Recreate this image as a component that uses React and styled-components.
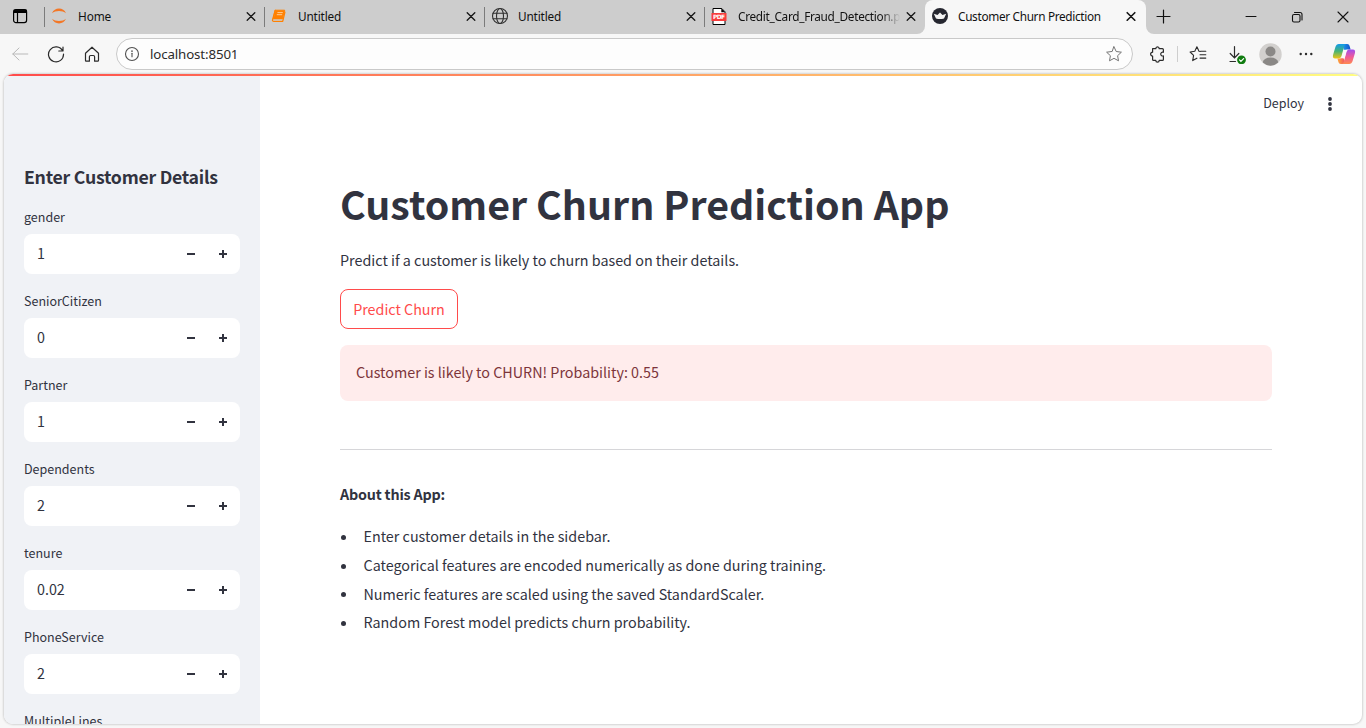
import React from "react";
import styled, { createGlobalStyle, css } from "styled-components";

const Global = createGlobalStyle`
  * { box-sizing: border-box; }
  body { margin: 0; background: #f7f7f7; overflow: hidden; }
  svg { display: block; flex: none; }
`;

const ui = `"Noto Sans", "Open Sans", sans-serif`;
const sans = `"Noto Sans CJK SC", "Noto Sans", sans-serif`;

const Window = styled.div`
  width: 1366px;
  height: 728px;
  display: flex;
  flex-direction: column;
  background: #f7f7f7;
  overflow: hidden;
`;

/* ---------- tab strip ---------- */
const TabStrip = styled.div`
  height: 34px;
  flex: none;
  display: flex;
  background: #f7f7f7;
`;
const TabGroup = styled.div`
  display: flex;
  width: 925px;
  background: #cdcdcd;
  border-bottom-right-radius: 8px;
`;
const WorkspaceButton = styled.div`
  width: 45px;
  padding: 8px 0 0 12px;
`;
const ActiveBackdrop = styled.div`
  width: 221px;
  background: #cdcdcd;
`;
const Tab = styled.div`
  width: 220px;
  height: 34px;
  display: flex;
  align-items: center;
  padding: 0 9.5px 2px 6px;
  flex: none;
  background: ${(p) => (p.$active ? "#f7f7f7" : "transparent")};
  ${(p) =>
    p.$active &&
    css`
      width: 221px;
      padding-right: 10.5px;
      border-radius: 8px 8px 0 0;
    `}
`;
const Divider = styled.i`
  width: 1px;
  height: 20px;
  margin: 7px 0 0 -1px;
  background: #7b7b7b;
  flex: none;
`;
const TabIcon = styled.span`
  width: 27px;
  flex: none;
`;
const TabTitle = styled.span`
  flex: 1;
  margin: 0 4px 0 0;
  padding-bottom: 1px;
  font: 11.8px/18px ${ui};
  letter-spacing: ${(p) => p.$track || 0}px;
  color: #111;
  white-space: nowrap;
  overflow: hidden;
  ${(p) =>
    p.$fade &&
    css`
      mask-image: linear-gradient(to right, #000 calc(100% - 20px), transparent calc(100% - 2px));
    `}
`;
const WindowControls = styled.div`
  flex: 1;
  display: flex;
  align-items: center;
  background: #cdcdcd;
  border-bottom-left-radius: 8px;
  padding: 0 17px 2px 10px;
`;
const ControlGroup = styled.div`
  display: flex;
  gap: 34px;
  margin-left: auto;
  padding-top: 2px;
`;

/* ---------- toolbar ---------- */
const Toolbar = styled.div`
  height: 40px;
  flex: none;
  display: flex;
  align-items: center;
`;
const NavButtons = styled.div`
  width: 116px;
  display: flex;
  gap: 18px;
  padding-left: 11px;
`;
const AddressBar = styled.div`
  width: 1017px;
  height: 32px;
  border: 1px solid #c9c9c9;
  border-radius: 16px;
  background: #fdfdfd;
  display: flex;
  align-items: center;
  padding: 0 9px 0 7px;
`;
const Url = styled.span`
  flex: 1;
  margin-left: 10px;
  font: 13.3px/20px ${ui};
  letter-spacing: -0.13px;
  color: #2b2b2b;
`;
const Actions = styled.div`
  flex: 1;
  display: flex;
  align-items: center;
  padding-left: 16px;
`;
const ActionSlot = styled.span`
  width: ${(p) => p.$w}px;
  display: flex;
`;
const ActionDivider = styled.i`
  width: 1px;
  height: 16px;
  margin-right: 11px;
  background: #cecece;
`;

/* ---------- page ---------- */
const Page = styled.div`
  height: 650px;
  margin: 0 4px;
  flex: none;
  display: flex;
  flex-direction: column;
  border-radius: 9px;
  overflow: hidden;
  background: #fff;
  box-shadow: 0 0 2px 1px rgba(0, 0, 0, 0.14);
  font-family: ${sans};
  color: #31333f;
`;
const Ribbon = styled.div`
  height: 2px;
  flex: none;
  background: linear-gradient(90deg, #ff4b4b, #fffd80);
`;
const Body = styled.div`
  flex: 1;
  min-height: 0;
  display: flex;
`;
const Sidebar = styled.aside`
  width: 256px;
  flex: none;
  padding: 84px 20px 0;
  background: #f0f2f6;
  overflow: hidden;
`;
const SidebarHeading = styled.h2`
  margin: 0 0 13px;
  font-size: 17.7px;
  line-height: 33px;
  font-weight: 600;
  letter-spacing: -0.26px;
  white-space: nowrap;
`;
const Field = styled.div`
  margin-bottom: 16px;
`;
const Label = styled.label`
  display: block;
  height: 24px;
  margin-bottom: 4px;
  font-size: 12.5px;
  line-height: 22px;
`;
const NumberBox = styled.div`
  height: 40px;
  border-radius: 8px;
  background: #fff;
  display: flex;
  align-items: center;
  padding: 0 10px 0 13px;
  gap: 18px;
`;
const Value = styled.span`
  flex: 1;
  padding-bottom: 2px;
  font-size: 14.3px;
  line-height: 20px;
`;
const Main = styled.main`
  flex: 1;
  display: flex;
  flex-direction: column;
`;
const AppHeader = styled.header`
  height: 56px;
  flex: none;
  display: flex;
  align-items: center;
  justify-content: flex-end;
  gap: 18px;
  padding: 0 24px 0 0;
  font-size: 12.5px;
`;
const DeployLabel = styled.span`
  line-height: 20px;
  padding-bottom: 2px;
`;
const Content = styled.div`
  padding: 44px 90px 0 80px;
  font-size: 14.33px;
  line-height: 26px;
`;
const Title = styled.h1`
  margin: 0;
  font-size: 39.3px;
  line-height: 54px;
  font-weight: 700;
  white-space: nowrap;
`;
const Intro = styled.p`
  margin: 17px 0 16px;
`;
const PredictButton = styled.button`
  display: block;
  width: 118px;
  height: 40px;
  padding: 0;
  border: 1px solid #ff4b4b;
  border-radius: 8px;
  background: #fff;
  color: #ff4b4b;
  font: 14.3px/26px ${sans};
`;
const Alert = styled.div`
  height: 56px;
  margin-top: 16px;
  padding: 14px 16px;
  border-radius: 8px;
  background: #ffecec;
  color: #7d353b;
`;
const Rule = styled.hr`
  height: 1px;
  margin: 48px 0 31px;
  border: 0;
  background: #d6d6d9;
`;
const About = styled.p`
  margin: 0 0 15px;
  font-weight: 600;
  letter-spacing: -0.2px;
`;
const List = styled.ul`
  margin: 0;
  padding: 0;
  list-style: none;
`;
const Item = styled.li`
  display: flex;
  align-items: center;
  height: 28.7px;
  &::before {
    content: "";
    width: 5px;
    height: 5px;
    margin: 2px 17.5px 0 1px;
    border-radius: 50%;
    background: #31333f;
  }
`;

/* ---------- icons ---------- */
const Svg = ({ w = 16, h = w, sw = 1, color = "#2b2b2b", children }) => (
  <svg width={w} height={h} viewBox={`0 0 ${w} ${h}`} fill="none" stroke={color} strokeWidth={sw} strokeLinecap="round" strokeLinejoin="round">
    {children}
  </svg>
);
const CloseIcon = ({ bold }) => (
  <Svg w={10} sw={bold ? 1.6 : 1.3} color="#151515"><path d="M1.2 1.7l7.6 7.6M8.8 1.7L1.2 9.3" /></Svg>
);
const WorkspaceIcon = () => (
  <Svg w={16} sw={1.2} color="#000">
    <rect x="1.6" y="1.6" width="13" height="13" rx="2.4" />
    <path d="M2 2.2h12.2v2.2H2z" fill="#000" />
    <path d="M5.5 5v9.5" />
  </Svg>
);
const JupyterIcon = () => (
  <Svg w={16}>
    <path d="M1 5.2C2.400 2.200 4.900.6 8 .6s5.600 1.600 7 4.600C13.200 3.800 10.800 3 8 3s-5.200.8-7 2.200zM1 10.800C2.400 13.800 4.900 15.400 8 15.400s5.600-1.600 7-4.600C13.200 12.200 10.800 13 8 13s-5.200-.8-7-2.200z" fill="#f37726" stroke="none" />
  </Svg>
);
const NotebookIcon = () => (
  <Svg w={16} color="#ff8000">
    <path d="M4.500 2.200h9.200L11.200 11H2.500z" fill="#ff8000" />
    <path d="M13.900 4.200l-2.200 9.200H2.800c-1 0-1.500-.7-1.200-1.600L4.300 2.300" strokeWidth="1.300" />
    <path d="M2.600 11.900h8.100" stroke="#cdcdcd" strokeWidth=".8" />
    <path d="M6.800 4.600h4.600M6.200 6.700h4.600" stroke="#ffe0bd" strokeWidth=".8" />
  </Svg>
);
const GlobeIcon = () => (
  <Svg w={18} sw={1.1} color="#303030">
    <circle cx="9" cy="9" r="7.500" />
    <ellipse cx="9" cy="9" rx="3.500" ry="7.500" />
    <path d="M2.100 6.300h13.800M2.100 11.700h13.800" />
  </Svg>
);
const PdfIcon = () => (
  <svg width="16" height="17" viewBox="0 0 16 17">
    <path d="M2 .5h8.800L14 3.800v12.700H2z" fill="#fff" stroke="#000" />
    <path d="M10.300.5v3.700H14z" fill="#000" />
    <rect x=".5" y="5" width="15" height="8" fill="#f73c3c" />
    <text x="8" y="11.400" fontFamily="DejaVu Sans" fontWeight="700" fontSize="6" fill="#fff" textAnchor="middle" textLength="12">PDF</text>
  </svg>
);
const CrownIcon = () => (
  <Svg w={18}>
    <circle cx="9" cy="9" r="8" fill="#262730" stroke="none" />
    <path d="M2.800 6.800l3.700 1.300L9 5.600l2.500 2.500 3.700-1.300-2.200 4.700q-4 1-8 0z" fill="#f4f4f4" stroke="none" />
  </Svg>
);
const BackIcon = () => (
  <Svg w={18} color="#b9b9b9"><path d="M8 3L1.800 9 8 15M1.800 9h15" /></Svg>
);
const ReloadIcon = () => (
  <Svg w={18} sw={1.2}><path d="M15.600 5.800A7.500 7.500 0 1 0 16.500 9M16 2v4h-4.200" /></Svg>
);
const HomeIcon = () => (
  <Svg w={18} sw={1.2}><path d="M2.500 8.200L9 2.200l6.500 6v7.100q0 .9-.9.900h-3v-4.400q0-1.300-1.300-1.300H7.700q-1.300 0-1.300 1.300v4.400h-3q-.9 0-.9-.9z" /></Svg>
);
const InfoIcon = () => (
  <Svg w={16} sw={1.1} color="#505050"><circle cx="8" cy="8" r="6.500" /><path d="M8 7.300v3.500" /><circle cx="8" cy="5.200" r=".3" /></Svg>
);
const starPath = "M9 1.800l2.200 4.700 5.200.7-3.800 3.500.9 5.100L9 13.300l-4.500 2.500.9-5.100-3.800-3.500 5.200-.7z";
const StarIcon = () => (
  <Svg w={18} color="#757575"><path d={starPath} /></Svg>
);
const PuzzleIcon = () => (
  <Svg w={18} sw={1.200}>
    <path d="M3.600 3.700h3.200c0-1.100.7-1.900 1.700-1.900s1.700.8 1.700 1.900h3.200q1 0 1 1v2.600c-1.200-.4-2.700.3-2.700 1.800s1.500 2.200 2.700 1.800v3.500q0 1-1 1h-3.200c0 1-.7 1.700-1.700 1.700s-1.700-.7-1.700-1.700H4.600q-1 0-1-1V11c-1.100 0-2-.7-2-1.900s.9-1.900 2-1.900z" />
  </Svg>
);
const FavoritesIcon = () => (
  <Svg w={18} sw={1.100}>
    <path d="M11.300 6.500L10 6.300 7.900 1.800 5.800 6.300l-4.700.7 3.500 3.400-.9 5.200 4.200-2.400M11.500 6.300H16.800M11 9.700h5.800M11 13.100H16.800" />
  </Svg>
);
const DownloadIcon = () => (
  <svg width="20" height="20" viewBox="0 0 20 20" fill="none" stroke="#2b2b2b" strokeWidth="1.200" strokeLinecap="round">
    <path d="M7.500 2.500v11M3.200 9.500l4.300 4.300 4.300-4.300M3 17.500h5.500" />
    <circle cx="14.500" cy="15.800" r="4.400" fill="#107c10" stroke="none" />
    <path d="M12.500 15.900l1.400 1.400 2.700-2.700" stroke="#fff" />
  </svg>
);
const AvatarIcon = () => (
  <svg width="23" height="23" viewBox="0 0 23 23">
    <circle cx="11.500" cy="11.500" r="11.200" fill="#d2d0ce" />
    <circle cx="11.500" cy="8.500" r="5" fill="#8a8886" />
    <path d="M3.800 19.600a7.700 5 0 0 1 15.400 0A11.200 11.200 0 0 1 3.800 19.600z" fill="#8a8886" />
  </svg>
);
const MoreIcon = () => (
  <svg width="14" height="4" fill="#2b2b2b"><circle cx="1.700" cy="2" r="1.200" /><circle cx="7" cy="2" r="1.200" /><circle cx="12.300" cy="2" r="1.200" /></svg>
);
const CopilotIcon = () => (
  <svg width="24" height="22" viewBox="0 0 24 22">
    <defs>
      <linearGradient id="cpTop" x1="0" y1="0" x2="1" y2="0"><stop offset="0" stopColor="#1f9df0" /><stop offset="1" stopColor="#1553c8" /></linearGradient>
      <linearGradient id="cpLeft" x1="0" y1="0" x2="0" y2="1"><stop offset="0" stopColor="#129bec" /><stop offset=".5" stopColor="#48b474" /><stop offset="1" stopColor="#f0c414" /></linearGradient>
      <linearGradient id="cpRight" x1="0" y1="0" x2="0" y2="1"><stop offset="0" stopColor="#a04df0" /><stop offset=".5" stopColor="#ee5a9a" /><stop offset="1" stopColor="#ff8a50" /></linearGradient>
      <linearGradient id="cpBottom" x1="0" y1="0" x2="1" y2="0"><stop offset="0" stopColor="#ffad39" /><stop offset="1" stopColor="#ef4668" /></linearGradient>
    </defs>
    <path d="M10 1h5.200c1.300 0 2 .8 2.400 2l1 3.500h-3c-1.800 0-2.500.8-3 2.400z" fill="url(#cpTop)" />
    <path d="M6.800 1h7.500c-1.300.3-1.800 1.200-2.200 2.500L9.500 13c-.5 1.600-1.300 2.500-3 2.500H3.200C1 15.500.5 13.800 1.100 11.700L3.400 4C4 2 5.200 1 6.800 1z" fill="url(#cpLeft)" />
    <path d="M14 21H8.800c-1.300 0-2-.8-2.400-2l-1-3.500h2.200c1.800 0 2.500-.8 3-2.400z" fill="url(#cpBottom)" />
    <path d="M17.200 21H9.700c1.300-.3 1.800-1.200 2.200-2.500L14.500 9c.5-1.600 1.300-2.500 3-2.500h3.300c2.200 0 2.700 1.700 2.100 3.800L20.600 18c-.6 2-1.800 3-3.400 3z" fill="url(#cpRight)" />
    <path d="M12 6.800h3.800c-.9.400-1.300 1.100-1.600 2.200l-1.700 6.200H8.400c.9-.4 1.300-1.100 1.600-2.200z" fill="#fafafa" />
  </svg>
);
const MinusIcon = () => <svg width="14" height="10" viewBox="0 0 14 10"><path d="M3 4h8v2H3z" fill="#31333f" /></svg>;
const PlusIcon = () => <svg width="14" height="10" viewBox="0 0 14 10"><path d="M3 4h3V1h2v3h3v2H8v3H6V6H3z" fill="#31333f" /></svg>;

const tabs = [
  { title: "Home", icon: <JupyterIcon />, track: -0.1 },
  { title: "Untitled", icon: <NotebookIcon />, track: -0.15 },
  { title: "Untitled", icon: <GlobeIcon />, track: -0.15 },
  { title: "Credit_Card_Fraud_Detection.pdf", icon: <PdfIcon />, fade: true, track: -0.3 },
];
const fields = [
  ["gender", "1"],
  ["SeniorCitizen", "0"],
  ["Partner", "1"],
  ["Dependents", "2"],
  ["tenure", "0.02"],
  ["PhoneService", "2"],
  ["MultipleLines", "0"],
];
const notes = [
  "Enter customer details in the sidebar.",
  "Categorical features are encoded numerically as done during training.",
  "Numeric features are scaled using the saved StandardScaler.",
  "Random Forest model predicts churn probability.",
];

export default function App() {
  return (
    <Window>
      <Global />
      <TabStrip>
        <TabGroup>
          <WorkspaceButton><WorkspaceIcon /></WorkspaceButton>
          {tabs.map((t, i) => (
            <React.Fragment key={i}>
              <Divider />
              <Tab>
                <TabIcon>{t.icon}</TabIcon>
                <TabTitle $fade={t.fade} $track={t.track}>{t.title}</TabTitle>
                <CloseIcon />
              </Tab>
            </React.Fragment>
          ))}
        </TabGroup>
        <ActiveBackdrop>
          <Tab $active>
            <TabIcon><CrownIcon /></TabIcon>
            <TabTitle $track={-0.32}>Customer Churn Prediction</TabTitle>
            <CloseIcon bold />
          </Tab>
        </ActiveBackdrop>
        <WindowControls>
          <Svg w={15} sw={1.200} color="#111"><path d="M7.500 1v13M1 7.500h13" /></Svg>
          <ControlGroup>
            <Svg w={12} color="#111"><path d="M1 5.500h10" /></Svg>
            <Svg w={12} sw={1.100} color="#111"><rect x="1.500" y="3.500" width="7.500" height="7.500" rx="1.500" /><path d="M3.500 1.500h5.500a2 2 0 0 1 2 2V9" /></Svg>
            <Svg w={12} sw={1.100} color="#111"><path d="M1 1l10 10M11 1L1 11" /></Svg>
          </ControlGroup>
        </WindowControls>
      </TabStrip>
      <Toolbar>
        <NavButtons><BackIcon /><ReloadIcon /><HomeIcon /></NavButtons>
        <AddressBar>
          <InfoIcon />
          <Url>localhost:8501</Url>
          <StarIcon />
        </AddressBar>
        <Actions>
          <ActionSlot $w={28}><PuzzleIcon /></ActionSlot>
          <ActionDivider />
          <ActionSlot $w={38}><FavoritesIcon /></ActionSlot>
          <ActionSlot $w={31.5}><DownloadIcon /></ActionSlot>
          <ActionSlot $w={40.5}><AvatarIcon /></ActionSlot>
          <ActionSlot $w={33}><MoreIcon /></ActionSlot>
          <CopilotIcon />
        </Actions>
      </Toolbar>
      <Page>
        <Ribbon />
        <Body>
          <Sidebar>
            <SidebarHeading>Enter Customer Details</SidebarHeading>
            {fields.map(([name, value]) => (
              <Field key={name}>
                <Label>{name}</Label>
                <NumberBox>
                  <Value>{value}</Value>
                  <MinusIcon />
                  <PlusIcon />
                </NumberBox>
              </Field>
            ))}
          </Sidebar>
          <Main>
            <AppHeader>
              <DeployLabel>Deploy</DeployLabel>
              <svg width="16" height="16" fill="#31333f"><circle cx="8" cy="3" r="1.900" /><circle cx="8" cy="8" r="1.900" /><circle cx="8" cy="13" r="1.900" /></svg>
            </AppHeader>
            <Content>
              <Title>Customer Churn Prediction App</Title>
              <Intro>Predict if a customer is likely to churn based on their details.</Intro>
              <PredictButton>Predict Churn</PredictButton>
              <Alert>Customer is likely to CHURN! Probability: 0.55</Alert>
              <Rule />
              <About>About this App:</About>
              <List>{notes.map((n) => <Item key={n}>{n}</Item>)}</List>
            </Content>
          </Main>
        </Body>
      </Page>
    </Window>
  );
}
